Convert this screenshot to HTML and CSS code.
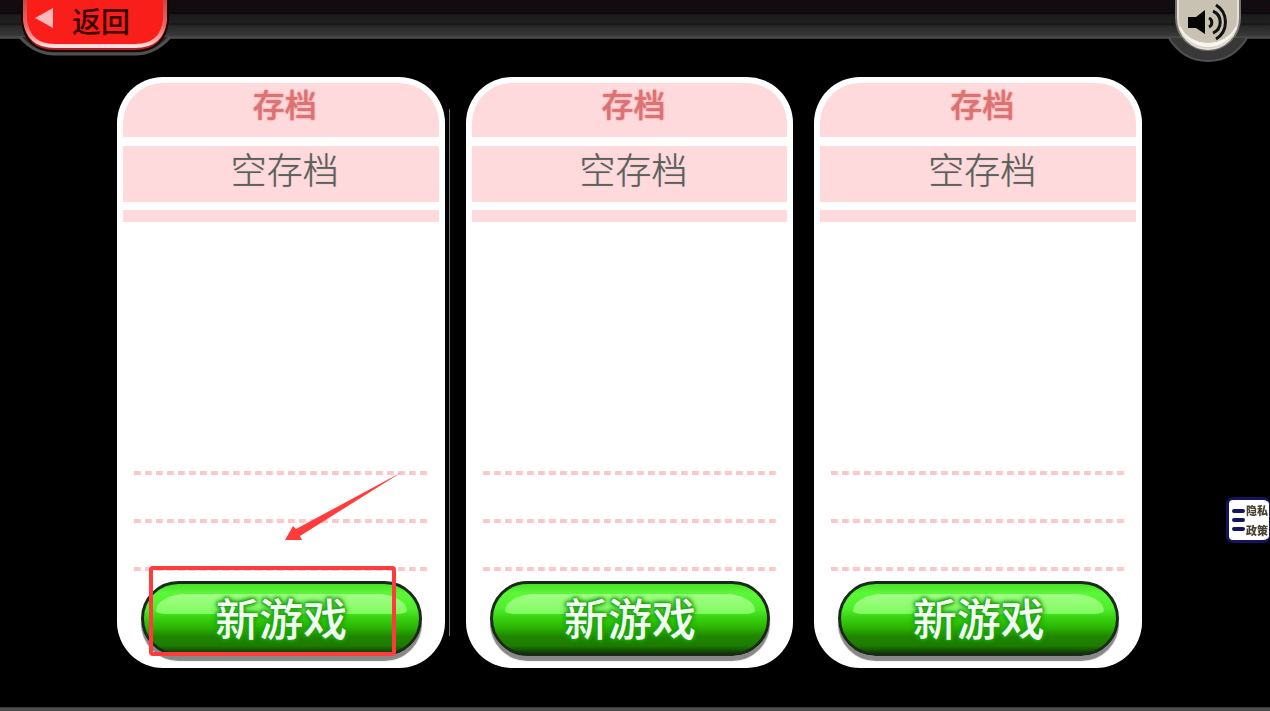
FILE: index.html
```
<!DOCTYPE html>
<html lang="zh-CN">
  <head>
    <meta charset="utf-8" />
    <meta name="viewport" content="width=device-width, initial-scale=1" />
    <title>存档</title>
    <link rel="stylesheet" href="styles.css">
  </head>
  <body>
    <header class="topbar">
      <button type="button" class="back-btn">
        <svg class="tab-shape" width="160" height="60" viewBox="0 0 160 60" aria-hidden="true">
          <defs>
            <linearGradient id="back-rim" x1="0" y1="0" x2="0" y2="1">
              <stop offset="0" stop-color="#c84040" />
              <stop offset="0.6" stop-color="#e86868" />
              <stop offset="0.9" stop-color="#ffb0b0" />
              <stop offset="1" stop-color="#ffe0e0" />
            </linearGradient>
          </defs>
          <path d="M5 37 Q20 54 40 54 H120 Q140 54 155 37" fill="#2a2a2a" stroke="#505050" stroke-width="3" />
          <path d="M6 -4 V20 Q9 52 40 52 H120 Q151 52 154 20 V-4Z" fill="#1c0505" />
          <path d="M8 -4 V20 Q11 50 40 50 H120 Q149 50 152 20 V-4Z" fill="#b02020" />
          <path d="M10 -4 V20 Q13 46 40 46 H120 Q147 46 150 20 V-4Z" fill="#fa1e1a" stroke="url(#back-rim)" stroke-width="4" />
          <path d="M20 18 L38 8 V28Z" fill="#ffb8b8" />
        </svg>
        <span class="back-label">返回</span>
      </button>

      <button type="button" class="sound-btn" aria-label="声音">
        <svg class="tab-shape" width="84" height="64" viewBox="0 0 84 64" aria-hidden="true">
          <path d="M3 38 Q17 61 42 61 T81 38" fill="#383838" stroke="#505050" stroke-width="2" />
          <path d="M9 -2 V18 A33 33 0 0 0 75 18 V-2Z" fill="#77736d" />
          <path d="M12 -2 V18 A30 31 0 0 0 72 18 V-2Z" fill="#c8c2b3" stroke="#e4e0d6" stroke-width="2" />
          <path d="M14 27 A30 31 0 0 0 70 27 A31 29 0 0 1 14 27Z" fill="#f7f5f0" stroke="#f7f5f0" stroke-width="1" />
          <path d="M22 17 H30 L39 10 V34 L30 28 H22Z" fill="#050505" />
          <g fill="none" stroke="#111" stroke-width="3">
            <path d="M43 18 A5 5 0 0 1 43 27" />
            <path d="M47 11 A12 12 0 0 1 47 33" />
            <path d="M50 5 A20 20 0 0 1 50 39" />
          </g>
        </svg>
      </button>
    </header>

    <main class="slots">
      <section class="slot">
        <h2 class="slot-title">存档</h2>
        <p class="slot-name">空存档</p>
        <div class="slot-strip"></div>
        <div class="slot-lines">
          <div class="dash"></div>
          <div class="dash"></div>
          <div class="dash"></div>
        </div>
        <button type="button" class="new-btn">新游戏</button>

        <!-- pointer and frame over the first slot's button -->
        <div class="guide">
          <svg class="guide-arrow" width="120" height="72" viewBox="0 0 120 72" aria-hidden="true">
            <path d="M0 70 L8 56 L11 59 L117 2 L15 66 L17 70Z" fill="#ff3b3b" />
          </svg>
          <div class="guide-frame"></div>
        </div>
      </section>

      <section class="slot">
        <h2 class="slot-title">存档</h2>
        <p class="slot-name">空存档</p>
        <div class="slot-strip"></div>
        <div class="slot-lines">
          <div class="dash"></div>
          <div class="dash"></div>
          <div class="dash"></div>
        </div>
        <button type="button" class="new-btn">新游戏</button>
      </section>

      <section class="slot">
        <h2 class="slot-title">存档</h2>
        <p class="slot-name">空存档</p>
        <div class="slot-strip"></div>
        <div class="slot-lines">
          <div class="dash"></div>
          <div class="dash"></div>
          <div class="dash"></div>
        </div>
        <button type="button" class="new-btn">新游戏</button>
      </section>
    </main>

    <footer class="bottombar"></footer>

    <a class="privacy" href="#privacy">
      <svg width="14" height="26" viewBox="0 0 14 26" aria-hidden="true">
        <path d="M3 4 H12 M3 13 H12 M3 22 H12" stroke="#14145e" stroke-width="4" stroke-linecap="round" />
      </svg>
      <span>隐私<br>政策</span>
    </a>
  </body>
</html>
```
FILE: styles.css
```
* {
  box-sizing: border-box;
}

body {
  display: flex;
  flex-direction: column;
  min-height: 100vh;
  margin: 0;
  background: #000;
  font-family: "Noto Sans CJK SC", "Noto Sans", sans-serif;
}

button {
  padding: 0;
  border: none;
  background: none;
  font-family: inherit;
  cursor: pointer;
}

.topbar {
  display: flex;
  justify-content: space-between;
  align-items: flex-start;
  height: 39px;
  padding: 0 20px 0 15px;
  background: linear-gradient(
    #120c11 0, #120c11 12px,
    #050505 13px, #1c1c1c 15px,
    #202020 23px, #141414 24px,
    #292929 26px, #323232 32px,
    #3a3a3a 36px, #505050 37px, #333 39px
  );
}

.back-btn {
  position: relative;
  width: 160px;
  height: 60px;
}

.sound-btn {
  position: relative;
  width: 84px;
  height: 64px;
}

.tab-shape {
  position: absolute;
  top: 0;
  left: 0;
}

.back-label {
  position: relative;
  display: block;
  height: 60px;
  padding-left: 12px;
  color: #3a0000;
  font-size: 29px;
  font-weight: 500;
  line-height: 40px;
}

.slots {
  flex: 1;
  display: grid;
  grid-template-columns: repeat(3, 1fr);
  gap: 21px;
  padding: 38px 128px 39px 117px;
}

.slot {
  position: relative;
  display: flex;
  flex-direction: column;
  padding: 6px;
  background: #fff;
  border-radius: 46px;
}

/* thin seam to the right of the first slot */
.slot:first-child::after {
  content: "";
  position: absolute;
  top: 32px;
  right: -5px;
  bottom: 32px;
  width: 1px;
  background: #777;
}

.slot-title,
.slot-name {
  margin: 0;
  background: #ffdadc;
  text-align: center;
}

.slot-title {
  height: 54px;
  margin-bottom: 9px;
  padding-left: 8px;
  border-radius: 40px 40px 0 0;
  color: #dc7274;
  font-size: 32px;
  font-weight: 500;
  line-height: 40px;
  text-shadow: 0 0 2px #dc7274;
}

.slot-name {
  height: 56px;
  margin-bottom: 8px;
  padding-left: 8px;
  color: #5c605c;
  font-size: 36px;
  font-weight: 300;
  line-height: 44px;
  text-shadow: 0 0 1px #8a8a88;
}

.slot-strip {
  height: 12px;
  background: #ffdadc;
}

.slot-lines {
  display: flex;
  flex-direction: column;
  gap: 44px;
  margin: auto 9px 10px 11px;
}

.dash {
  height: 4px;
  background: repeating-linear-gradient(90deg, #fac8ca 0, #fac8ca 6px, #fff 8px, #fff 11px);
}

.new-btn {
  position: relative;
  z-index: 0;
  height: 75px;
  margin: 0 17px 6px 18px;
  padding-bottom: 4px;
  border: 3px solid #1a2a18;
  border-radius: 38px;
  background: linear-gradient(
    #48e028 0, #5cf838 14%, #50ee2c 35%,
    #34cc0c 52%, #2cb804 62%,
    #208600 76%, #1c7a00 90%, #0c3a00 100%
  );
  box-shadow: 0 5px 1px #888;
  color: #f2fff0;
  font-size: 44px;
  font-weight: 500;
  line-height: 64px;
  text-shadow: 0 0 2px #1fa512, 0 0 3px #1fa512, 0 0 4px #1fa512, 0 0 5px #1fa512, 0 0 6px #1fa512;
}

/* gloss */
.new-btn::before {
  content: "";
  position: absolute;
  z-index: -1;
  top: 10px;
  left: 12px;
  right: 12px;
  height: 20px;
  border-radius: 36px 36px 12px 12px / 20px 20px 4px 4px;
  background: linear-gradient(#a2ff86, #80fa5e);
}

.guide {
  position: absolute;
  z-index: 1;
  left: 32px;
  bottom: 12px;
  width: 247px;
  pointer-events: none;
}

.guide-arrow {
  display: block;
  margin: 0 0 24px 136px;
}

.guide-frame {
  height: 90px;
  border: 4px solid #ff3b3b;
  border-radius: 4px;
}

.bottombar {
  height: 4px;
  background: linear-gradient(#333, #555 2px, #444);
}

.privacy {
  position: fixed;
  right: 0;
  bottom: 168px;
  display: flex;
  align-items: center;
  justify-content: space-between;
  width: 44px;
  height: 46px;
  padding: 0 1px 0 2px;
  border: 3px solid #14145e;
  border-right-width: 1px;
  border-radius: 7px;
  background: #fff;
  color: #4a4232;
  font-size: 11px;
  font-weight: 900;
  line-height: 20px;
  text-decoration: none;
}
```
